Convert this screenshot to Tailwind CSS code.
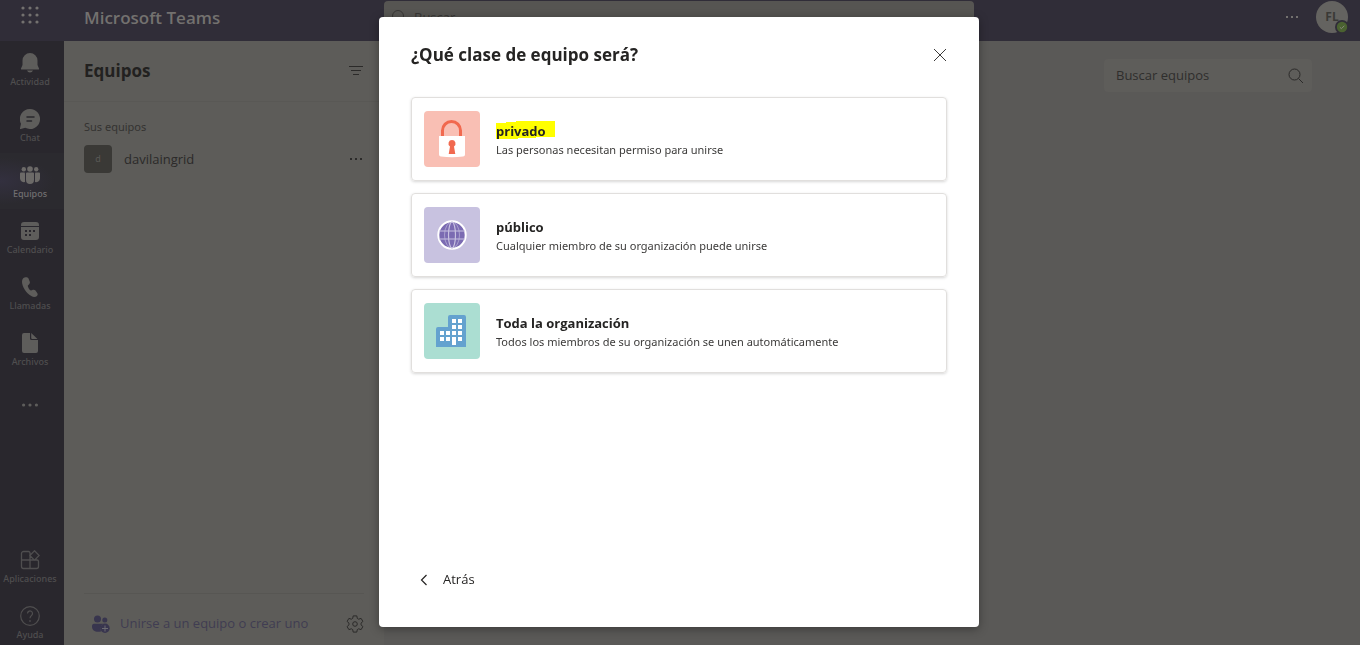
<!DOCTYPE html>
<html lang="es">
<head>
<meta charset="utf-8">
<meta name="viewport" content="width=device-width, initial-scale=1">
<title>Microsoft Teams</title>
<script src="https://cdn.jsdelivr.net/npm/@tailwindcss/browser@4"></script>
</head>
<body class="h-screen flex flex-col overflow-hidden bg-[#5a5957] font-['Open_Sans','Noto_Sans',sans-serif] text-sm text-[#2b2a29]">

<header class="h-[41px] shrink-0 flex items-start bg-[#302d38] text-[#73716f]">
  <button aria-label="Iniciador de aplicaciones" class="w-16 h-[30px] shrink-0 flex items-center pl-5">
    <svg class="size-5" viewBox="0 0 20 20" fill="currentColor"><circle cx="3" cy="3" r="1.600"/><circle cx="10" cy="3" r="1.600"/><circle cx="17" cy="3" r="1.600"/><circle cx="3" cy="10" r="1.600"/><circle cx="10" cy="10" r="1.600"/><circle cx="17" cy="10" r="1.600"/><circle cx="3" cy="17" r="1.600"/><circle cx="10" cy="17" r="1.600"/><circle cx="17" cy="17" r="1.600"/></svg>
  </button>
  <div class="w-80 shrink-0 pl-5 pt-1 text-[17px] leading-7 font-semibold">Microsoft Teams</div>
  <label class="mt-px h-8 w-[590px] flex items-center gap-2 rounded bg-[#565552] pl-1.5 text-[#383735]">
    <svg class="size-4 shrink-0" viewBox="0 0 16 16" fill="none" stroke="currentColor"><circle cx="8" cy="7" r="5.500"/><path d="M4 11l-2.500 2.500"/></svg>
    <input type="text" aria-label="Buscar" placeholder="Buscar" class="w-full bg-transparent text-[13px] outline-none placeholder:text-[#383735]">
  </label>
  <div class="ml-auto flex items-center gap-4 pr-3 h-[34px]">
    <button aria-label="Más opciones" class="w-4"><svg class="w-4 h-4" viewBox="0 0 16 16" fill="currentColor"><path d="M2 7h2v2H2zM7 7h2v2H7zM12 7h2v2h-2z"/></svg></button>
    <button class="relative size-8 rounded-full bg-[#646360] text-[12px] font-bold text-[#3a3a36]">FL
      <svg class="absolute -right-px -bottom-px size-3.5" viewBox="0 0 14 14"><circle cx="7" cy="7" r="7" fill="#302d38"/><circle cx="7" cy="7" r="5.200" fill="#4a6130"/><path d="M4.800 7.200l1.600 1.500 3-3" fill="none" stroke="#85867c"/></svg>
    </button>
  </div>
</header>

<div class="flex-1 min-h-0 flex">
  <nav aria-label="Aplicaciones" class="w-16 shrink-0 flex flex-col bg-[#29272d] pr-1 font-['Noto_Sans',sans-serif] font-medium text-[9px] leading-3 text-[#4f4e4f]">
    <a href="#" class="h-14 flex flex-col items-center gap-[3px] pt-3">
      <svg class="size-5 text-[#5e5d5b]" viewBox="0 0 20 20" fill="currentColor"><path d="M10 0a7.500 7.500 0 0 0-7.500 7.500V12L1 15.500c-.2.500 0 1 .7 1h16.600c.7 0 .9-.5.7-1L17.500 12V7.500A7.500 7.500 0 0 0 10 0zM7 17.500a3.200 3.200 0 0 0 6 0z"/></svg>Actividad</a>
    <a href="#" class="h-14 flex flex-col items-center gap-[3px] pt-3">
      <svg class="size-5 text-[#5e5d5b]" viewBox="0 0 20 20"><path fill="currentColor" d="M10 0a10 10 0 1 1-4.700 18.800L.7 20c-.5.100-.8-.2-.7-.7l1-4.600A10 10 0 0 1 10 0z"/><path d="M7 8h7M7 12h4.500" stroke="#29272d" stroke-width="1.500" stroke-linecap="round"/></svg>Chat</a>
    <a href="#" aria-current="page" class="h-14 -mr-1 pr-1 flex flex-col items-center gap-[3px] pt-3 bg-radial-[at_0%_50%] from-[#33303f] to-[#2b2a2f] to-60% text-[#716f70]">
      <svg class="size-5 text-[#6c6a68]" viewBox="0 0 20 20" fill="currentColor"><circle cx="10" cy="4" r="2.800"/><circle cx="3.800" cy="4.200" r="2.200"/><circle cx="16.200" cy="4.200" r="2.200"/><path d="M6 8.500Q6 7.500 7 7.500h6q1 0 1 1V15a4 4 0 0 1-8 0zM0 8.500Q0 7.500 1 7.500h3.700Q5 8 5 9v8a4 4 0 0 1-5-3.500zM20 8.500Q20 7.500 19 7.500h-3.700Q15 8 15 9v8a4 4 0 0 0 5-3.500z"/></svg>Equipos</a>
    <a href="#" class="h-14 flex flex-col items-center gap-[3px] pt-3">
      <svg class="size-5 text-[#5e5d5b]" viewBox="0 0 20 20"><path fill="currentColor" d="M1 5V4a3 3 0 0 1 3-3h12a3 3 0 0 1 3 3v1zM1 6h18v10a3 3 0 0 1-3 3H4a3 3 0 0 1-3-3z"/><path fill="#29272d" d="M5 9h2v2H5zM9 9h2v2H9zM13 9h2v2h-2zM5 13h2v2H5zM9 13h2v2H9z"/></svg>Calendario</a>
    <a href="#" class="h-14 flex flex-col items-center gap-[3px] pt-3">
      <svg class="size-5 text-[#5e5d5b]" viewBox="0 0 20 20" fill="currentColor"><path d="M4.500.6C6.500-.2 8 .2 8.600 1.700l1.100 2.800c.5 1.300.1 2.200-.8 3l-1 .9c-.4.400.2 2 1 3.300.8 1.200 1.700 1.900 2.200 1.700l1.800-.6c1-.3 2 0 2.600.8l1.700 2.300c.8 1.100.6 2.200-.2 3-1.300 1.300-3.500 1.500-5.700.2C6 16 2 9.500 2 4.800 2 2.500 3 1.200 4.500.6z"/></svg>Llamadas</a>
    <a href="#" class="h-14 flex flex-col items-center gap-[3px] pt-3">
      <svg class="size-5 text-[#5e5d5b]" viewBox="0 0 20 20" fill="currentColor"><path d="M4 0h6v5.500A1.500 1.500 0 0 0 11.500 7H18v11a2 2 0 0 1-2 2H4a2 2 0 0 1-2-2V2a2 2 0 0 1 2-2zM11.200 0 17.500 6h-5.300a1 1 0 0 1-1-1z"/></svg>Archivos</a>
    <button aria-label="Más aplicaciones" class="h-14 flex items-center justify-center text-[#5e5d5b]"><svg class="w-4 h-4" viewBox="0 0 16 16" fill="currentColor"><circle cx="1.600" cy="8" r="1.600"/><circle cx="8" cy="8" r="1.600"/><circle cx="14.400" cy="8" r="1.600"/></svg></button>
    <a href="#" class="mt-auto h-14 flex flex-col items-center gap-[3px] pt-[17px]">
      <svg class="size-5" viewBox="0 0 20 20" fill="none" stroke="currentColor" stroke-width="1.300"><path d="M10 10V3a1.500 1.500 0 0 0-1.500-1.500h-5A2 2 0 0 0 1.500 3.500v13a2 2 0 0 0 2 2h13a2 2 0 0 0 2-2v-5A1.500 1.500 0 0 0 17 10H1.500M10 10v8.500M14.500.800l4.700 4.700-4.700 4.700L9.800 5.500z"/></svg>Aplicaciones</a>
    <a href="#" class="h-14 flex flex-col items-center gap-[3px] pt-[17px]">
      <svg class="size-5" viewBox="0 0 20 20" fill="none" stroke="currentColor" stroke-width="1.200"><circle cx="10" cy="10" r="9.300"/><path d="M7.500 7.500a2.500 2.500 0 1 1 4 2c-.9.700-1.500 1.300-1.500 2.800"/><path d="M9.200 14.200h1.600v1.600H9.200z" fill="currentColor" stroke="none"/></svg>Ayuda</a>
  </nav>

  <aside class="w-80 shrink-0 flex flex-col bg-[#5d5c59]">
    <div class="h-[61px] flex items-center justify-between border-b border-[#595855] pl-5 pr-5">
      <h1 class="text-[17px] font-bold text-[#222120]">Equipos</h1>
      <button aria-label="Filtro"><svg class="w-4 h-4" viewBox="0 0 16 16" stroke="currentColor" fill="none"><path d="M1 3.500h14M3 7.500h10M5 11.500h6"/></svg></button>
    </div>
    <h2 class="px-5 pt-[15px] font-['Noto_Sans',sans-serif] text-[11px] leading-5 text-[#343331]">Sus equipos</h2>
    <div class="mt-2 flex items-center px-5 text-[13px]">
      <span class="size-7 flex items-center justify-center rounded bg-[#3a3936] text-[9px] text-[#5d5c59]">d</span>
      <a href="#" class="ml-3">davilaingrid</a>
      <button aria-label="Más opciones" class="ml-auto"><svg class="w-4 h-4" viewBox="0 0 16 16" fill="currentColor"><path d="M2 7h2v2H2zM7 7h2v2H7zM12 7h2v2h-2z"/></svg></button>
    </div>
    <div class="mt-auto mx-5 h-[52px] pt-2 flex items-center border-t border-[#575653]">
      <a href="#" class="flex items-center gap-2.5 pl-2 text-[13px] text-[#403d52]">
        <svg class="size-[18px]" viewBox="0 0 18 18"><g fill="#38354e"><circle cx="5.500" cy="4" r="3.500"/><circle cx="12.800" cy="5" r="2.500"/><path d="M2 8.700h9q-3.500 3-2 7.800C4 17.500 0 16 0 11.500Q0 8.700 2 8.700z"/><circle cx="13" cy="13.300" r="4.700"/></g><path d="M13 10.500v6M10 13.500h6" stroke="#6b6a70"/></svg>
        Unirse a un equipo o crear uno</a>
      <button aria-label="Administrar equipos" class="ml-auto"><svg class="size-[18px]" viewBox="0 0 18 18" fill="none" stroke="currentColor" stroke-linejoin="round"><path d="M7.200.900h3.600l.5 2.500 1.300.8 2.500-.8 1.800 3-1.900 1.800v1.600l1.900 1.800-1.800 3-2.500-.8-1.300.8-.5 2.500H7.200l-.5-2.500-1.300-.8-2.500.8-1.800-3L3 9.800V8.200L1.100 6.400l1.800-3 2.500.8 1.300-.8z"/><circle cx="9" cy="9" r="2.300"/></svg></button>
    </div>
  </aside>

  <main class="flex-1 flex justify-end items-start pt-[18px] pr-12">
    <label class="w-52 h-[33px] flex items-center rounded bg-[#5e5d5a] pl-3 pr-2">
      <input type="text" aria-label="Buscar equipos" placeholder="Buscar equipos" class="w-full min-w-0 bg-transparent text-[13px] outline-none placeholder:text-[#2f2e2d]">
      <svg class="size-4 shrink-0" viewBox="0 0 16 16" fill="none" stroke="currentColor"><circle cx="6.500" cy="6.500" r="5.500"/><path d="M10.500 10.500l4.500 4.500"/></svg>
    </label>
  </main>
</div>

<div class="fixed inset-0 flex items-center justify-center pt-[17px] pb-[18px] pr-0.5">
  <section role="dialog" aria-modal="true" aria-labelledby="title" class="w-full max-w-[600px] h-full flex flex-col rounded bg-white px-8 pt-6 pb-8 text-[#252423] shadow-[0_2px_10px_rgba(0,0,0,0.35)]">
    <div class="flex items-center justify-between h-7">
      <h2 id="title" class="text-[17px] font-bold">¿Qué clase de equipo será?</h2>
      <button aria-label="Cerrar"><svg class="size-3.5" viewBox="0 0 14 14" stroke="#3b3a39" fill="none"><path d="M1 1l12 12M13 1L1 13"/></svg></button>
    </div>
    <div class="mt-7 flex flex-col gap-3">
      <button class="h-[84px] flex items-center gap-4 rounded border border-[#e1dfdd] px-3 text-left shadow-[0_1px_3px_rgba(0,0,0,0.16)]">
        <svg class="size-14 shrink-0 rounded-sm bg-[#f9bfb4]" viewBox="0 0 56 56"><path d="M18.500 26v-6.500a9 9 0 0 1 18 0V26" fill="none" stroke="#f1694f" stroke-width="3"/><path d="M15 25h26v18.500a2 2 0 0 1-2 2q-11 1.500-22 0a2 2 0 0 1-2-2z" fill="#fff"/><path d="M28 29a3.500 3.500 0 0 1 2 6.400L31.300 43h-6.600L26 35.400A3.500 3.500 0 0 1 28 29z" fill="#f1694f"/></svg>
        <span class="flex flex-col pt-0.5">
          <span class="relative self-start text-[13px] leading-5 font-bold"><svg class="absolute left-0 top-0 w-[59px] h-[18px]" viewBox="0 0 59 18"><path d="M0 2h10V1h10V0h39v16H40v1H22v1H0z" fill="#ff0"/></svg><span class="relative">privado</span></span>
          <span class="font-['Noto_Sans',sans-serif] text-[11px] leading-[18px] text-[#3b3a39]">Las personas necesitan permiso para unirse</span>
        </span>
      </button>
      <button class="h-[84px] flex items-center gap-4 rounded border border-[#e1dfdd] px-3 text-left shadow-[0_1px_3px_rgba(0,0,0,0.16)]">
        <svg class="size-14 shrink-0 rounded-sm bg-[#c8c2e0]" viewBox="0 0 56 56"><circle cx="28" cy="28" r="13.700" fill="#7b6bb2" stroke="#fff" stroke-width="2"/><path d="M15 24h26M15 32h26" fill="none" stroke="#c8c2e0" stroke-width="1.200"/><ellipse cx="28" cy="28" rx="3.500" ry="13" fill="none" stroke="#c8c2e0" stroke-width="1.200"/><ellipse cx="28" cy="28" rx="7.500" ry="13" fill="none" stroke="#c8c2e0" stroke-width="0.600"/></svg>
        <span class="flex flex-col pt-0.5">
          <span class="text-[13px] leading-5 font-bold">público</span>
          <span class="font-['Noto_Sans',sans-serif] text-[11px] leading-[18px] text-[#3b3a39]">Cualquier miembro de su organización puede unirse</span>
        </span>
      </button>
      <button class="h-[84px] flex items-center gap-4 rounded border border-[#e1dfdd] px-3 text-left shadow-[0_1px_3px_rgba(0,0,0,0.16)]">
        <svg class="size-14 shrink-0 rounded-sm bg-[#abded2]" viewBox="0 0 56 56"><path d="M12 44V26a2 2 0 0 1 2-2h10V14a2 2 0 0 1 2-2h14a2 2 0 0 1 2 2v30z" fill="#64a2cf"/><path d="M28 16h4v4h-4zM34 16h4v4h-4zM28 22h4v4h-4zM34 22h4v4h-4zM16 28h4v4h-4zM22 28h4v4h-4zM28 28h4v4h-4zM34 28h4v4h-4zM16 34h4v4h-4zM22 34h4v4h-4zM28 34h4v8h-4zM34 34h4v4h-4z" fill="#fff"/></svg>
        <span class="flex flex-col pt-0.5">
          <span class="text-[13px] leading-5 font-bold">Toda la organización</span>
          <span class="font-['Noto_Sans',sans-serif] text-[11px] leading-[18px] text-[#3b3a39]">Todos los miembros de su organización se unen automáticamente</span>
        </span>
      </button>
    </div>
    <button class="mt-auto self-start h-8 flex items-center gap-3 pl-1.5 text-[13px]">
      <svg class="w-3.5 h-3.5" viewBox="0 0 14 14" fill="none" stroke="currentColor" stroke-width="1.200"><path d="M9.500 3l-5 5 5 5"/></svg>Atrás</button>
  </section>
</div>
</body>
</html>
